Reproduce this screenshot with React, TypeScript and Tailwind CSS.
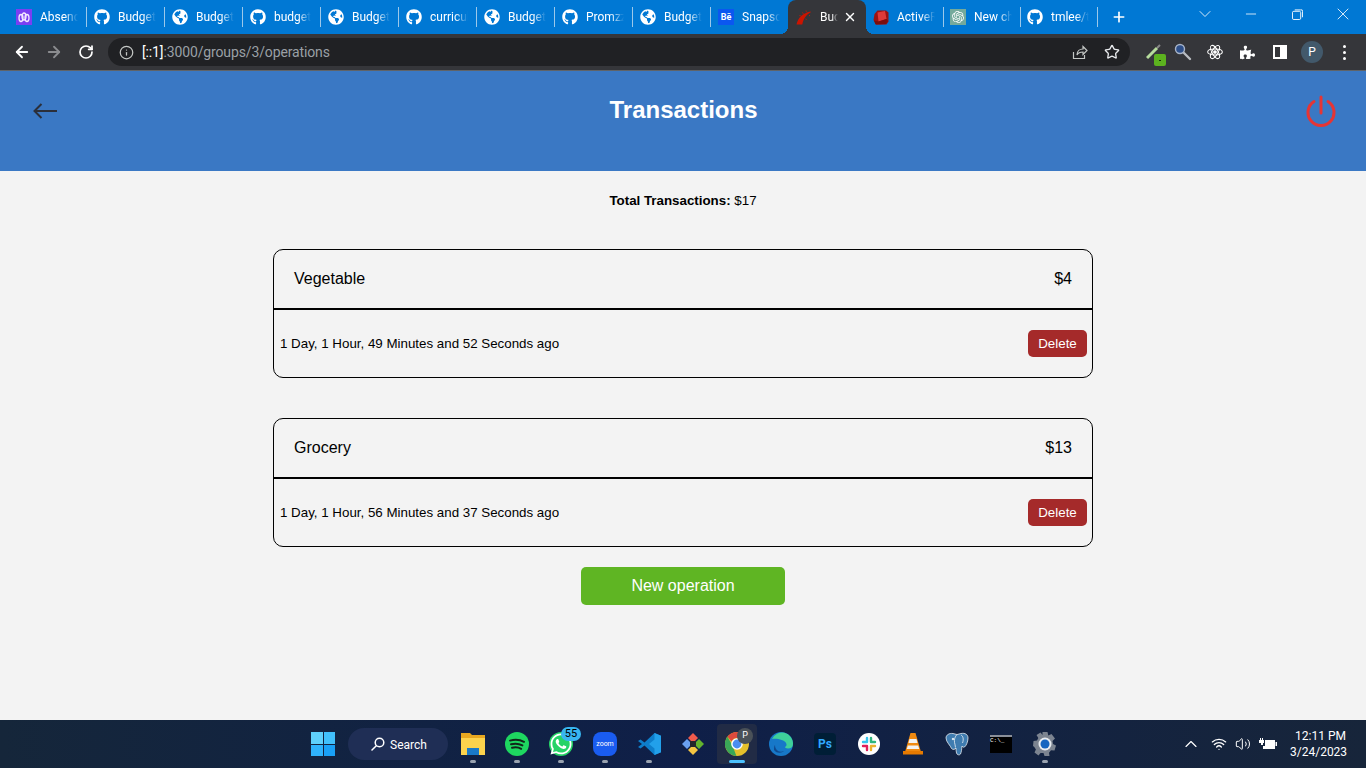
import { ReactNode } from "react";
import { ArrowLeft, ArrowRight, ChevronDown, ChevronUp, Info, Minus, Plus, RotateCw, Star, Volume2, Wifi, X } from "lucide-react";
import { FaGithub, FaGlobeAmericas, FaPuzzlePiece, FaWhatsapp } from "react-icons/fa";
import { SiOpenai } from "react-icons/si";

const Absence = () => (
  <div className="flex h-4 w-4 items-center justify-center bg-[#7a3ff2]">
    <svg viewBox="0 0 16 16" className="h-4 w-4" fill="none" stroke="#f3e9ff" strokeWidth="1.3">
      <ellipse cx="5" cy="9" rx="2" ry="3.500" />
      <ellipse cx="8" cy="7.500" rx="2" ry="3.500" />
      <ellipse cx="11" cy="9" rx="2" ry="3.500" />
    </svg>
  </div>
);

const GithubIcon = () => <FaGithub className="h-4 w-4 text-white" />;
const GlobeIcon = () => <FaGlobeAmericas className="h-4 w-4 text-white" />;

const Behance = () => (
  <div className="flex h-4 w-4 items-center justify-center bg-[#0b57f0] text-[9px] font-bold leading-none text-white">
    Bē
  </div>
);

const Rails = () => (
  <svg viewBox="0 0 16 16" className="h-4 w-4 shrink-0">
    <path d="M0.500 15.500C2 9 6 4.500 14.500 2.500l.3.8C10.500 5.500 7.500 9.500 6.300 15.500z" fill="#cc1400" />
    <path d="M3.500 6l1 1M6.500 3.500l.8 1.200M10 1.500l.3 1.200M13 6.500l1 .3M9.500 10l1 .5" stroke="#cc1400" strokeWidth="1" />
  </svg>
);

const RubyGem = () => (
  <svg viewBox="0 0 16 16" className="h-4 w-4">
    <path d="M4.500 1.500h8.500l2.500 2v9l-2 3-10.500.2L.5 11 1.500 5z" fill="#9c1212" />
    <path d="M4.500 3.500l7.500-1.500 1.500 8-8 2.500z" fill="#df3a3a" />
    <path d="M1 11.500l4.500 1 8-2.500 1.500 2-2 3-10.500.2z" fill="#7a0d0d" />
  </svg>
);

const ChatGpt = () => (
  <div className="flex h-4 w-4 items-center justify-center bg-[#74aa9c]">
    <SiOpenai className="h-3 w-3 text-white" />
  </div>
);

type TabData = { icon: ReactNode; title: string };

const leftTabs: TabData[] = [
  { icon: <Absence />, title: "Absence" },
  { icon: <GithubIcon />, title: "Budget" },
  { icon: <GlobeIcon />, title: "Budget" },
  { icon: <GithubIcon />, title: "budget" },
  { icon: <GlobeIcon />, title: "Budget" },
  { icon: <GithubIcon />, title: "curriculum" },
  { icon: <GlobeIcon />, title: "Budget" },
  { icon: <GithubIcon />, title: "Promzzz" },
  { icon: <GlobeIcon />, title: "Budget" },
  { icon: <Behance />, title: "Snapscan" },
];

const rightTabs: TabData[] = [
  { icon: <RubyGem />, title: "ActiveRecord" },
  { icon: <ChatGpt />, title: "New chat" },
  { icon: <GithubIcon />, title: "tmlee/time" },
];

function Tab({ tab, last, narrow }: { tab: TabData; last: boolean; narrow?: boolean }) {
  return (
    <div className={`relative flex h-[34px] shrink-0 items-center pr-2 ${narrow ? "w-[77px] pl-[7px]" : "w-[78px] pl-2"}`}>
      <div className="shrink-0">{tab.icon}</div>
      <span className="ml-2 overflow-hidden whitespace-nowrap text-xs text-white [mask-image:linear-gradient(to_right,#000_65%,transparent_100%)]">
        {tab.title}
      </span>
      {!last && <div className="absolute -right-px top-[7px] h-5 w-px bg-[#9cc8ea]" />}
    </div>
  );
}

function TabStrip() {
  return (
    <div className="flex h-[34px] bg-[#0078d4] pl-2 font-['Roboto',sans-serif]">
      {leftTabs.map((t, i) => (
        <Tab key={i} tab={t} last={i === leftTabs.length - 1} />
      ))}
      <div className="relative flex h-[34px] w-[78px] shrink-0 items-center rounded-t-lg bg-[#35363a] pl-2 pr-2">
        <div className="absolute -left-2 bottom-0 h-2 w-2 bg-[radial-gradient(circle_at_0_0,#0078d4_8px,#35363a_8px)]" />
        <div className="absolute -right-2 bottom-0 h-2 w-2 bg-[radial-gradient(circle_at_100%_0,#0078d4_8px,#35363a_8px)]" />
        <Rails />
        <span className="ml-2 w-[18px] overflow-hidden whitespace-nowrap text-xs text-white [mask-image:linear-gradient(to_right,#000_65%,transparent_100%)]">
          Budget
        </span>
        <X className="ml-[5px] h-[14px] w-[14px] shrink-0 text-white" strokeWidth={2.5} />
      </div>
      {rightTabs.map((t, i) => (
        <Tab key={i} tab={t} last={false} narrow />
      ))}
      <Plus className="ml-[14px] mt-[9px] h-4 w-4 text-white" strokeWidth={2.5} />
      <div className="ml-auto flex h-[28px] items-center text-white">
        <div className="flex w-[46px] justify-center">
          <ChevronDown className="h-5 w-5" strokeWidth={1} />
        </div>
        <div className="flex w-[46px] justify-center">
          <Minus className="h-4 w-4" strokeWidth={1.2} />
        </div>
        <div className="flex w-[46px] justify-center">
          <svg viewBox="0 0 12 12" className="h-[11px] w-[11px]" fill="none" stroke="white" strokeWidth="1">
            <rect x="0.5" y="2.5" width="9" height="9" rx="1.5" />
            <path d="M3 1h6.5A1.5 1.5 0 0 1 11.5 2.5V9" />
          </svg>
        </div>
        <div className="flex w-[46px] justify-center">
          <X className="h-5 w-5" strokeWidth={1} />
        </div>
      </div>
    </div>
  );
}

function Toolbar() {
  return (
    <div className="flex h-9 items-center bg-[#35363a] font-['Roboto',sans-serif]">
      <div className="flex w-[108px] shrink-0 items-center pl-[13px] text-white">
        <ArrowLeft className="h-[18px] w-[18px]" strokeWidth={2.4} />
        <ArrowRight className="ml-[14px] h-[18px] w-[18px] text-[#8b8c8f]" strokeWidth={2.4} />
        <RotateCw className="ml-[15px] h-4 w-4" strokeWidth={2.6} />
      </div>
      <div className="flex h-7 w-[1022px] shrink-0 items-center rounded-full bg-[#202124] pl-[11px] pr-[10px]">
        <Info className="h-[15px] w-[15px] text-[#c4c7c5]" />
        <span className="ml-[8px] text-sm tracking-[-0.13px] text-[#9aa0a6]">
          <span className="text-white">[::1]</span>:3000/groups/3/operations
        </span>
        <svg viewBox="0 0 16 16" className="ml-auto h-4 w-4" fill="none" stroke="#c4c7c5" strokeWidth="1.2">
          <path d="M1.5 8v6.5h11V11" />
          <path d="M5 11c0-4 3-6 6-6V2.5l4 4-4 4V8c-3 0-5 1-6 3z" />
        </svg>
        <Star className="ml-4 h-4 w-4 text-[#e8eaed]" strokeWidth={2} />
      </div>
      <div className="flex flex-1 items-center">
        <div className="relative ml-[16px] flex w-4 justify-center">
          <svg viewBox="0 0 16 16" className="h-4 w-4">
            <path d="M1 14L11 4" stroke="#b6dc9c" strokeWidth="3" />
            <path d="M11 4l3-3" stroke="#888" strokeWidth="2" />
          </svg>
          <div className="absolute -bottom-[6px] left-[8px] flex h-3 w-3 items-center justify-center rounded-[2px] bg-[#5cb21f]">
            <div className="h-px w-[2px] bg-[#12300a]" />
          </div>
        </div>
        <svg viewBox="0 0 18 18" className="ml-[12px] h-[18px] w-[18px]">
          <path d="M9 9l7 7" stroke="#b9bcc0" strokeWidth="2.400" strokeLinecap="round" />
          <circle cx="6" cy="6" r="4.500" fill="#2d4f8a" stroke="#a8b4c8" strokeWidth="1.400" />
        </svg>
        <svg viewBox="0 0 24 24" className="ml-[15px] h-4 w-4" fill="none" stroke="#fff" strokeWidth="1.6">
          <ellipse cx="12" cy="12" rx="11" ry="4.400" />
          <ellipse cx="12" cy="12" rx="11" ry="4.400" transform="rotate(60 12 12)" />
          <ellipse cx="12" cy="12" rx="11" ry="4.400" transform="rotate(120 12 12)" />
          <circle cx="12" cy="12" r="2" fill="#fff" />
        </svg>
        <FaPuzzlePiece className="ml-[17px] h-[15px] w-[15px] text-white" />
        <div className="ml-[18px] flex h-[14px] w-[14px] justify-end border-2 border-white">
          <div className="h-full w-[5px] bg-white" />
        </div>
        <div className="ml-[14px] flex h-[22px] w-[22px] items-center justify-center rounded-full bg-[#42596b] text-xs text-white">P</div>
        <div className="ml-[20px] flex flex-col gap-[3px]">
          <div className="h-[3px] w-[3px] rounded-full bg-white" />
          <div className="h-[3px] w-[3px] rounded-full bg-white" />
          <div className="h-[3px] w-[3px] rounded-full bg-white" />
        </div>
      </div>
    </div>
  );
}

function OperationCard({ name, amount, age }: { name: string; amount: string; age: string }) {
  return (
    <div className="w-[820px] rounded-[10px] border border-black">
      <div className="flex h-[60px] items-center justify-between border-b-2 border-black px-5 text-base text-black">
        <span>{name}</span>
        <span>{amount}</span>
      </div>
      <div className="flex h-[67px] items-center justify-between pl-[6px] pr-[5px] text-[13.33px] text-black">
        <span>{age}</span>
        <button className="h-[27px] w-[59px] rounded-[5px] bg-[#a52a2a] text-white">Delete</button>
      </div>
    </div>
  );
}

const Spotify = () => (
  <svg viewBox="0 0 24 24" className="h-6 w-6">
    <circle cx="12" cy="12" r="12" fill="#1ed760" />
    <path d="M5 8.600c5-1.300 10-.9 14 1.200M6 12.300c4-1 8-.7 11.400 1.100M7 15.800c3.400-.8 6.500-.5 9.200 1" fill="none" stroke="#12261a" strokeWidth="2" strokeLinecap="round" />
  </svg>
);

const VsCode = () => (
  <svg viewBox="0 0 24 24" className="h-6 w-6">
    <path d="M17.500 1L24 3.800v16.400L17.500 23 7.500 13.500l-4 3L1 15l4-3-4-3 2.500-1.500 4 3z" fill="#0e7ecb" />
    <path d="M17.500 1L24 3.800v16.400L17.500 23V16.500L12 12l5.500-4.500z" fill="#22a0ea" />
  </svg>
);

const Kraken = () => (
  <svg viewBox="0 0 24 24" className="h-6 w-6">
    <path d="M12 1l5 5-5 5-5-5z" fill="#ef5b4c" />
    <path d="M6 7l5 5-5 5-5-5z" fill="#6aa0f0" />
    <path d="M18 7l5 5-5 5-5-5z" fill="#63b32e" />
    <path d="M12 13l5 5-5 5-5-5z" fill="#f5c542" />
    <path d="M9 9h6v6H9z" fill="#22252b" />
  </svg>
);

const Chrome = () => (
  <svg viewBox="0 0 24 24" className="h-6 w-6">
    <circle cx="12" cy="12" r="12" fill="#e5c02b" />
    <path d="M12 0a12 12 0 0 1 10.400 6H12a6 6 0 0 0-5.400 3.400L2.400 4.800A12 12 0 0 1 12 0z" fill="#dd4a3d" />
    <path d="M2.400 4.800l5 8.400 4 10.800A12 12 0 0 1 2.400 4.800z" fill="#3aa757" />
    <circle cx="12" cy="12" r="5.800" fill="#fff" />
    <circle cx="12" cy="12" r="4.400" fill="#4a8df0" />
  </svg>
);

const Edge = () => (
  <svg viewBox="0 0 24 24" className="h-6 w-6">
    <circle cx="12" cy="12" r="12" fill="#1778c8" />
    <path d="M3 7a11 11 0 0 1 21 5c0 3-2 4.500-5 4.500-2 0-3-.8-3-1.500 1.500-1 2-2 1-4C15.500 8 8 6 3 7z" fill="#3fd09a" />
    <path d="M6 13c0 5 4 8 9 6-2 2-7 3-10-1 0-2 0-4 1-5z" fill="#0f4a8f" />
  </svg>
);

const Slack = () => (
  <div className="flex h-[22px] w-[22px] items-center justify-center rounded-full bg-white">
    <svg viewBox="0 0 16 16" className="h-4 w-4" strokeWidth="2.400" strokeLinecap="round" fill="none">
      <path d="M6 2v4M2 6h4" stroke="#36c5f0" />
      <path d="M14 6h-4M10 2v4" stroke="#2eb67d" />
      <path d="M10 14v-4M14 10h-4" stroke="#ecb22e" />
      <path d="M2 10h4M6 14v-4" stroke="#e01e5a" />
    </svg>
  </div>
);

const Vlc = () => (
  <svg viewBox="0 0 24 24" className="h-6 w-6">
    <path d="M9.500 1h5l5.500 19h-16z" fill="#f08a10" />
    <path d="M8.500 7h7l1 4h-9zM6.800 13.500h10.400l1 3.500H5.800z" fill="#f2f2f2" />
    <path d="M2 19h20v3.500H2z" fill="#e67a00" />
  </svg>
);

const Postgres = () => (
  <svg viewBox="0 0 24 24" className="h-6 w-6" stroke="#fff" strokeWidth="0.7">
    <path d="M1 6c0-3 3-5 7-4.500L12 2.500 16 1.500c4-.8 7 1 7 4.500 0 4-2 8-3.500 9-1 .7-2-.3-2.500-1-.3 3-.5 6-1.500 8-1 1.500-3.500 1-4-1-.3-1.500-.5-3-.5-5-1 1.500-3 2-4.500.5C5.500 13.500 1 10 1 6z" fill="#3f7cb0" />
    <path d="M12 2.500c-2 2-3 5-2.500 8 .2 1.500 1 3 1 5M16 3c2 1 3 4 1.500 8" fill="none" />
    <circle cx="8" cy="7" r="0.800" fill="#fff" />
  </svg>
);

const Gear = () => (
  <svg viewBox="0 0 24 24" className="h-6 w-6">
    <path d="M9.500 0h5l.8 3.500 3.200-1.500 3.500 4.500-2.500 2.500.5 3 3 1.500-1.500 5-3.500-.2-2 2.400.5 3.300h-5l-1-3-3-.1-2 2.500-4-3 1.400-3-1.600-2.500L0 14l.5-5 3.500-.5 1.300-2.500L3.500 3 7.500.5 9.500 3z" fill="#7c8490" />
    <circle cx="12" cy="12" r="6.500" fill="#e8ecf0" />
    <circle cx="12" cy="12" r="4.500" fill="#1565c0" />
  </svg>
);

function TaskItem({ children, dot }: { children: ReactNode; dot?: boolean }) {
  return (
    <div className="relative flex h-12 w-11 shrink-0 items-center justify-center">
      {children}
      {dot && <div className="absolute bottom-[5px] h-[3px] w-[6px] rounded-full bg-[#9aa3b0]" />}
    </div>
  );
}

function Taskbar() {
  return (
    <div className="flex h-12 items-center bg-gradient-to-r from-[#15263a] via-[#0f1f48] to-[#17253a] pl-[301px] pr-5 font-['Roboto',sans-serif] text-white">
      <TaskItem>
        <div className="grid h-6 w-6 grid-cols-2 gap-[1px]">
          <div className="bg-[#5fd0fb]" />
          <div className="bg-[#41c0fb]" />
          <div className="bg-[#2fb2fb]" />
          <div className="bg-[#19a0f6]" />
        </div>
      </TaskItem>
      <div className="ml-[3px] mr-[3px] flex h-8 w-[100px] shrink-0 items-center rounded-full bg-[#1f2e55] pl-[23px] text-xs">
        <svg viewBox="0 0 14 14" className="h-[14px] w-[14px]" fill="none" stroke="white" strokeWidth="1.500">
          <circle cx="8.500" cy="5.500" r="4.300" />
          <path d="M5.300 8.700L1 13" strokeLinecap="round" />
        </svg>
        <span className="ml-[5px] mt-[2px]">Search</span>
      </div>
      <TaskItem dot>
        <svg viewBox="0 0 24 24" className="h-6 w-6">
          <path d="M0 1h9l2 2h13v20H0z" fill="#e8a820" />
          <path d="M0 6h24v17H0z" fill="#fcd34d" />
          <path d="M6 16h12v7H6z" fill="#1a7ac8" />
        </svg>
      </TaskItem>
      <TaskItem dot>
        <Spotify />
      </TaskItem>
      <TaskItem dot>
        <div className="flex h-6 w-6 items-center justify-center rounded-full bg-[#25d366]">
          <FaWhatsapp className="h-6 w-6 text-white" />
        </div>
        <div className="absolute left-[22px] top-[7px] flex h-[14px] w-5 items-center justify-center rounded-full bg-[#38b6f1] text-[11px] text-black">55</div>
      </TaskItem>
      <TaskItem dot>
        <div className="flex h-6 w-6 items-center justify-center rounded-lg bg-[#1a5cf0] text-[7px] text-white">zoom</div>
      </TaskItem>
      <TaskItem dot>
        <VsCode />
      </TaskItem>
      <TaskItem>
        <Kraken />
      </TaskItem>
      <TaskItem>
        <div className="absolute left-[2px] top-1 h-10 w-10 rounded bg-[#212b45]" />
        <div className="relative">
          <Chrome />
        </div>
        <div className="absolute right-[6px] top-[8px] flex h-4 w-4 items-center justify-center rounded-full bg-[#4a5158] text-[9px] text-white">P</div>
        <div className="absolute bottom-[5px] h-[3px] w-4 rounded-full bg-[#4cc2ff]" />
      </TaskItem>
      <TaskItem>
        <Edge />
      </TaskItem>
      <TaskItem>
        <div className="flex h-[22px] w-[22px] items-center justify-center rounded bg-[#001e36] text-xs font-bold text-[#31a8ff]">Ps</div>
      </TaskItem>
      <TaskItem>
        <Slack />
      </TaskItem>
      <TaskItem>
        <Vlc />
      </TaskItem>
      <TaskItem>
        <Postgres />
      </TaskItem>
      <TaskItem>
        <div className="h-[18px] w-[22px] border-t-2 border-[#8a8f99] bg-black font-['Liberation_Mono',monospace] text-[6px] leading-[8px] text-white">C:\_</div>
      </TaskItem>
      <TaskItem dot>
        <Gear />
      </TaskItem>
      <div className="ml-auto flex items-center">
        <ChevronUp className="h-5 w-5" strokeWidth={1.4} />
        <Wifi className="ml-[10px] h-4 w-4" strokeWidth={2} />
        <Volume2 className="ml-2 h-4 w-4" strokeWidth={1.5} />
        <svg viewBox="0 0 18 14" className="ml-2 h-[14px] w-[18px]" fill="white">
          <path d="M1 1h1v2h1V1h1v2h1v3H4v2H2V6H0V3h1z" />
          <path d="M6 3h10v9H4V9h2z" />
          <path d="M16.500 5H18v4h-1.500z" />
        </svg>
        <div className="ml-[13px] w-[56px] text-right text-xs leading-4">
          <div>12:11 PM</div>
          <div>3/24/2023</div>
        </div>
      </div>
    </div>
  );
}

export default function App() {
  return (
    <div className="flex h-screen flex-col overflow-hidden bg-[#f3f3f3] font-['Liberation_Sans',Arial,sans-serif]">
      <TabStrip />
      <Toolbar />

      {/* Page header */}
      <header className="flex h-[101px] shrink-0 items-start justify-between border-t border-[#5f6368] bg-[#3a78c4] pl-[33px] pr-[30px] pt-6">
        <div className="w-7">
          <svg viewBox="0 0 24 16" className="mt-[8px] h-[16px] w-[24px]" fill="none" stroke="#2b2f3a" strokeWidth="2">
            <path d="M24 8H1.500M8.500 1L1.500 8l7 7" />
          </svg>
        </div>
        <h1 className="mt-[1px] text-2xl font-bold leading-7 text-white">Transactions</h1>
        <svg viewBox="0 0 30 32" className="h-8 w-[30px]" fill="none" stroke="#e53535" strokeWidth="3" strokeLinecap="round">
          <path d="M15 2v16" />
          <path d="M8 6.500a13 13 0 1 0 14 0" />
        </svg>
      </header>

      {/* Transactions list */}
      <main className="flex flex-1 flex-col items-center">
        <p className="mt-[22px] text-[13.33px] leading-4 text-black">
          <span className="font-bold">Total Transactions:</span> $17
        </p>
        <div className="mt-10 flex flex-col gap-10">
          <OperationCard name="Vegetable" amount="$4" age="1 Day, 1 Hour, 49 Minutes and 52 Seconds ago" />
          <OperationCard name="Grocery" amount="$13" age="1 Day, 1 Hour, 56 Minutes and 37 Seconds ago" />
        </div>
        <button className="mt-5 h-[38px] w-[204px] rounded-[5px] bg-[#5fb523] text-base text-white">New operation</button>
      </main>

      <Taskbar />
    </div>
  );
}
